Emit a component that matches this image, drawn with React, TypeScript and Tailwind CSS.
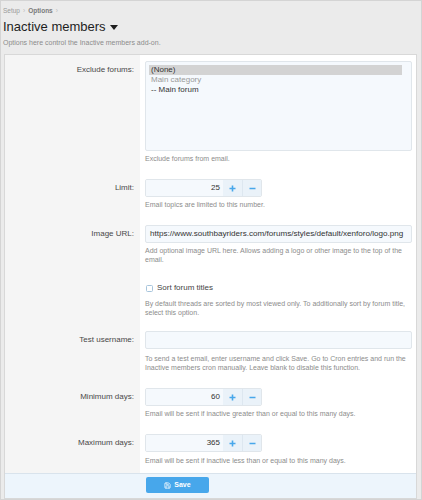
import { Save } from "lucide-react"

const font = { fontFamily: '"Liberation Sans", Arial, sans-serif' }

function Row({
  label,
  pad,
  children,
}: {
  label?: string
  pad: string
  children: React.ReactNode
}) {
  return (
    <div className="grid grid-cols-[135px_1fr]">
      <div className={`bg-[#f5f5f5] pr-[6px] text-right text-[8px] leading-[18px] text-[#484848] ${pad}`}>
        {label}
      </div>
      <div className={`bg-white pl-[5px] pr-[4px] ${pad}`}>{children}</div>
    </div>
  )
}

function Help({ children, mt = "mt-[3px]" }: { children: React.ReactNode; mt?: string }) {
  return <p className={`${mt} text-[7px] leading-[9px] text-[#8c8c8c]`}>{children}</p>
}

function NumberBox({ value }: { value: string }) {
  return (
    <div className="flex h-[18px] w-[117px] overflow-hidden rounded-[2px] border border-[#e0e6eb]">
      <div className="flex flex-1 items-center justify-end bg-[#f5f9fd] pr-[3px] text-[8px] text-[#333]">{value}</div>
      <button className="flex w-[19px] items-center justify-center bg-[#eaf2f9]">
        <svg width="7" height="7" viewBox="0 0 7 7">
          <path d="M3.5 0.5v6M0.5 3.5h6" stroke="#47a7eb" strokeWidth="1.6" />
        </svg>
      </button>
      <button className="flex w-[19px] items-center justify-center border-l border-[#dde7f0] bg-[#eaf2f9]">
        <svg width="7" height="7" viewBox="0 0 7 7">
          <path d="M0.5 3.5h6" stroke="#47a7eb" strokeWidth="1.6" />
        </svg>
      </button>
    </div>
  )
}

export default function App() {
  return (
    <div style={font} className="h-[500px] w-[422px] overflow-hidden border border-[#d4d4d4] bg-[#ebebeb]">
      <div className="px-[2px] pt-[5px]">
        <div className="flex items-center gap-[3px] text-[6.5px] leading-[9px] text-[#9a9a9a]">
          <span>Setup</span>
          <span className="text-[#bbb]">›</span>
          <span className="font-bold text-[#7a7a7a]">Options</span>
          <span className="text-[#bbb]">›</span>
        </div>
        <h1 className="mt-[3px] flex items-center gap-[4px] text-[13px] leading-[18px] text-[#1e1e1e]">
          Inactive members
          <svg width="8" height="5" viewBox="0 0 8 5">
            <path d="M0 0h8L4 5z" fill="#1e1e1e" />
          </svg>
        </h1>
        <p className="mt-[2px] text-[7px] leading-[9px] text-[#8c8c8c]">
          Options here control the Inactive members add-on.
        </p>
      </div>

      <div className="ml-[3px] mt-[7px] w-[413px] border border-[#d8d8d8] bg-white">
        <Row label="Exclude forums:" pad="pt-[6px] pb-[8px]">
          <div className="h-[90px] rounded-[2px] border border-[#e0e6eb] bg-[#f5f9fd] pl-[3px] pr-[9px] pt-[3px] text-[8px] leading-[10px]">
            <div className="bg-[#d3d3d3] pl-[2px] text-[#333]">(None)</div>
            <div className="pl-[2px] text-[#9a9a9a]">Main category</div>
            <div className="pl-[2px] text-[#333]">-- Main forum</div>
          </div>
          <Help>Exclude forums from email.</Help>
        </Row>

        <Row label="Limit:" pad="py-[8px]">
          <NumberBox value="25" />
          <Help>Email topics are limited to this number.</Help>
        </Row>

        <Row label="Image URL:" pad="py-[8px]">
          <div className="flex h-[18px] items-center rounded-[2px] border border-[#e0e6eb] bg-[#f5f9fd] pl-[4px] text-[8.1px] text-[#333]">
            https://www.southbayriders.com/forums/styles/default/xenforo/logo.png
          </div>
          <Help>Add optional image URL here. Allows adding a logo or other image to the top of the email.</Help>
        </Row>

        <Row pad="pt-[10px] pb-[6px]">
          <label className="flex h-[12px] items-center gap-[4px] pl-[1px] text-[8px] text-[#444]">
            <span className="h-[7px] w-[7px] rounded-[1.5px] border border-[#a7c5dc] bg-white" />
            Sort forum titles
          </label>
          <Help mt="mt-[5px]">
            By default threads are sorted by most viewed only. To additionally sort by forum title, select this option.
          </Help>
        </Row>

        <Row label="Test username:" pad="py-[8px]">
          <div className="h-[18px] rounded-[2px] border border-[#e0e6eb] bg-[#f5f9fd]" />
          <Help mt="mt-[5px]">
            To send a test email, enter username and click Save. Go to Cron entries and run the Inactive members cron
            manually. Leave blank to disable this function.
          </Help>
        </Row>

        <Row label="Minimum days:" pad="py-[8px]">
          <NumberBox value="60" />
          <Help>Email will be sent if inactive greater than or equal to this many days.</Help>
        </Row>

        <Row label="Maximum days:" pad="py-[8px]">
          <NumberBox value="365" />
          <Help mt="mt-[4px]">Email will be sent if inactive less than or equal to this many days.</Help>
        </Row>

        <div className="h-[25px] border-t border-[#d9e3ec] bg-[#edf5fc] pl-[141px] pt-[3px]">
          <button className="flex h-[16px] w-[63px] items-center justify-center gap-[3px] rounded-[2px] bg-[#47a7eb] text-[7px] font-bold text-white">
            <Save size={7} strokeWidth={2.5} />
            Save
          </button>
        </div>
      </div>
    </div>
  )
}
